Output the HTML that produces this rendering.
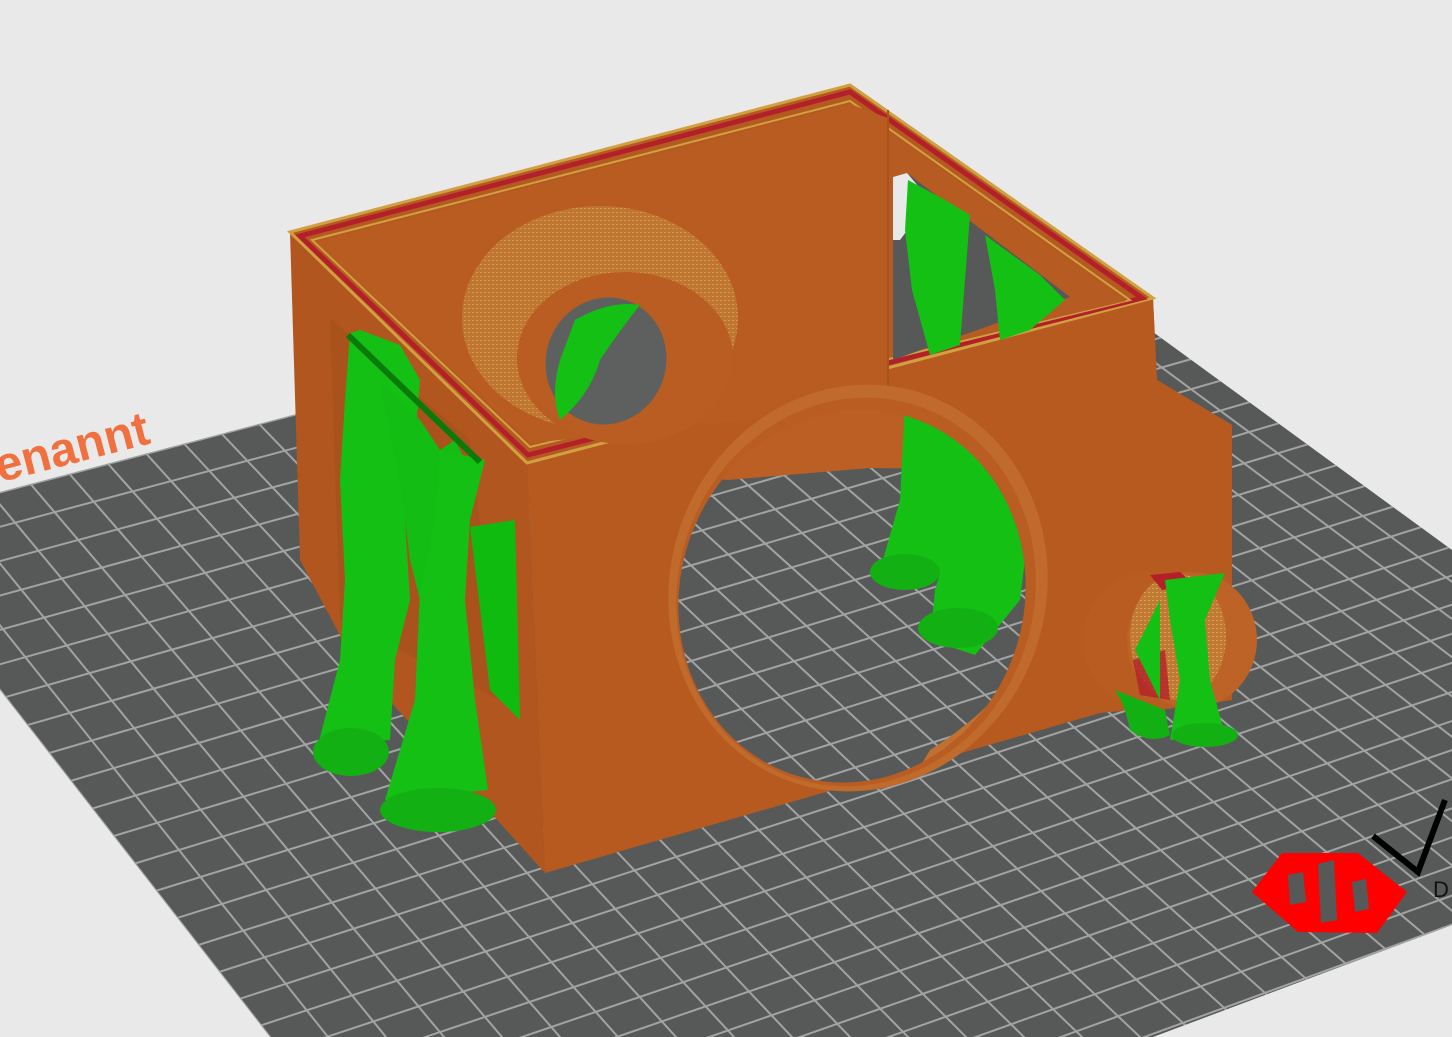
<!DOCTYPE html>
<html><head><meta charset="utf-8"><style>
html,body{margin:0;padding:0;background:#e9e9e9;width:1452px;height:1037px;overflow:hidden;}
svg{display:block;}
</style></head><body>
<svg id="s" width="1452" height="1037" viewBox="0 0 1452 1037" xmlns="http://www.w3.org/2000/svg">
<defs>
<clipPath id="plate"><polygon points="0,492 1009,227 1452,550 1452,925 1153,1037 270,1037 0,690"/></clipPath>
<clipPath id="inner"><polygon points="660,475 728,480 870,468 1050,470 1050,800 660,800"/></clipPath>
<pattern id="dots" width="4" height="4" patternUnits="userSpaceOnUse"><rect width="4" height="4" fill="#c07a35"/><rect width="2" height="1" fill="#d9a448"/></pattern>
</defs>
<rect width="1452" height="1037" fill="#e9e9e9"/>
<polygon points="0,492 1009,227 1452,550 1452,925 1153,1037 270,1037 0,690" fill="#575858"/>
<g id="grid" clip-path="url(#plate)" stroke="#a2a3a3" stroke-width="2"></g>
<text x="152" y="443" transform="rotate(-14.5 152 443)" text-anchor="end" font-family="Liberation Sans, sans-serif" font-weight="bold" font-size="48" letter-spacing="0" fill="#f07040">enannt</text>

<!-- logo -->
<polygon points="1252,892 1282,853 1358,853 1407,892 1377,933 1298,932" fill="#ff0000"/>
<polygon points="1288,875 1303,872 1306,902 1290,905" fill="#575858"/>
<polygon points="1318,864 1334,860 1337,920 1321,923" fill="#575858"/>
<polygon points="1352,882 1366,879 1369,909 1355,912" fill="#575858"/>
<path d="M1373,836 L1418,872 L1445,800" stroke="#000" stroke-width="6" fill="none"/>
<text x="1433" y="897" font-family="Liberation Sans, sans-serif" font-size="22" fill="#111">D</text>

<!-- left face -->
<polygon points="290,232 527,463 545,873 353,660 300,560" fill="#b0561e"/>
<polygon points="330,318 470,440 500,700 340,620" fill="#a9521c"/>
<polygon points="470,527 515,520 520,720 490,690" fill="#10bb10"/>

<!-- front face -->
<polygon points="527,463 1153,298 1157,380 1232,425 1232,700 1100,713 545,873" fill="#b65a20"/>
<!-- top rim and interior -->
<polygon points="290,232 850,85 1153,298 527,463" fill="#b45a20"/>
<polygon points="290,232 850,85 1153,298 527,463" fill="none" stroke="#d1a040" stroke-width="3"/>
<polygon points="300,236 850,92 1142,298 528,455" fill="none" stroke="#b3202a" stroke-width="5"/>
<polygon points="312,240 850,101 1130,300 530,447" fill="none" stroke="#d1a040" stroke-width="2"/>
<polygon points="316,242 850,104 1126,301 531,443" fill="#b65b22"/>
<polygon points="316,242 850,104 888,118 888,405 531,443" fill="#b85c22"/>
<line x1="888" y1="110" x2="888" y2="400" stroke="#a8521c" stroke-width="2"/>
<!-- back tube -->
<ellipse cx="600" cy="318" rx="138" ry="112" fill="url(#dots)" opacity="0.85"/>
<ellipse cx="625" cy="358" rx="108" ry="86" fill="#b95d22"/>
<ellipse cx="606" cy="361" rx="60" ry="64" transform="rotate(20 606 361)" fill="#5e5f5f"/>
<path d="M575,320 Q610,300 640,305 Q620,330 600,360 Q590,395 560,420 Q550,395 560,360 Z" fill="#14c014"/>
<!-- right window -->
<polygon points="893,177 907,173 1070,297 893,360" fill="#575858"/>
<polygon points="893,177 907,173 930,200 900,240 893,240" fill="#e9e9e9"/>
<path d="M908,180 L945,200 L970,215 L965,280 L960,345 L930,355 L912,290 L905,230 Z" fill="#14c014"/>
<path d="M985,235 L1040,275 L1065,300 L1030,330 L1000,340 L995,290 Z" fill="#14c014"/>
<!-- front hole -->
<ellipse cx="858" cy="588" rx="188" ry="205" transform="rotate(18 858 588)" fill="#c06a2c"/>
<ellipse cx="856" cy="592" rx="178" ry="196" transform="rotate(18 856 592)" fill="#b95d22"/>
<clipPath id="hole"><ellipse cx="852" cy="596" rx="172" ry="188" transform="rotate(18 852 596)"/></clipPath>
<g clip-path="url(#hole)">
<rect x="600" y="380" width="500" height="450" fill="#bb5f24"/>
<polygon points="660,475 728,480 870,468 1050,470 1050,800 660,800" fill="#575858"/>
<g clip-path="url(#inner)"><g id="grid2" stroke="#a2a3a3" stroke-width="2"></g></g>
<path d="M905,400 L945,395 L965,430 L960,500 L955,575 L910,580 L880,570 L900,500 Z" fill="#14c014"/>
<path d="M960,430 L1000,440 L1030,520 L1020,600 L975,655 L930,640 L935,590 L955,520 Z" fill="#14c014"/>
<ellipse cx="905" cy="572" rx="35" ry="18" fill="#12b012"/>
<ellipse cx="958" cy="628" rx="40" ry="20" fill="#12b012"/>
<path d="M930,750 Q1010,700 1050,620 L1060,800 L900,800 Z" fill="#c07030"/>
</g>
<!-- right block + tube -->
<polygon points="1153,298 1157,380 1232,425 1232,700 1160,710" fill="#b65a20"/>
<ellipse cx="1150" cy="640" rx="67" ry="68" fill="#b85c22"/>
<rect x="1150" y="572" width="42" height="136" fill="#b85c22"/>
<ellipse cx="1192" cy="640" rx="65" ry="68" fill="#bd6328"/>
<ellipse cx="1178" cy="637" rx="48" ry="63" fill="url(#dots)"/>
<polygon points="1150,575 1180,572 1195,585 1162,590" fill="#b3202a"/>
<polygon points="1133,660 1165,650 1170,700 1140,695" fill="#b3202a" opacity="0.8"/>
<path d="M1165,580 L1225,573 L1205,620 L1210,680 L1225,735 L1170,740 L1180,680 L1170,620 Z" fill="#14c014"/>
<path d="M1135,650 L1160,600 L1160,700 Z" fill="#14c014"/>
<ellipse cx="1205" cy="735" rx="33" ry="12" fill="#12b012"/>
<path d="M1115,690 Q1125,705 1130,730 Q1150,745 1170,735 L1165,710 Z" fill="#12b012"/>

<!-- left supports -->
<path d="M350,333 L360,330 L400,345 L420,380 L415,440 L405,520 L410,600 L395,660 L390,740 L318,745 L340,660 L345,580 L340,480 L345,400 Z" fill="#14c014"/>
<ellipse cx="351" cy="752" rx="38" ry="24" fill="#12b012"/>
<path d="M380,380 L420,420 L440,450 L455,440 L470,470 L450,520 L430,560 L420,600 L410,560 L400,480 Z" fill="#13bd13"/>
<path d="M440,450 L485,460 L470,520 L465,600 L475,700 L488,790 L385,800 L415,700 L420,590 L435,520 Z" fill="#14c014"/>
<ellipse cx="438" cy="810" rx="58" ry="22" fill="#12b012"/>
<path d="M348,335 L480,462" stroke="#0a7a0a" stroke-width="6"/>
</svg>
<script>
(function(){
var ns="http://www.w3.org/2000/svg";
function line(g,x1,y1,x2,y2){var l=document.createElementNS(ns,"line");l.setAttribute("x1",x1);l.setAttribute("y1",y1);l.setAttribute("x2",x2);l.setAttribute("y2",y2);g.appendChild(l);}
var gs=[document.getElementById("grid"),document.getElementById("grid2")];
gs.forEach(function(g){
 var vx=-2162,vy=-2088;
 for(var i=-50;i<50;i++){var px=270+58*i,py=1037;var dx=px-vx,dy=py-vy;var t=(1100-vy)/dy;line(g,vx,vy,vx+dx*t,1100);}
 var N=28;
 for(var j=0;j<=N;j++){var t=j/N;line(g,-200,545+t*983,1700,45+t*789);}
});
})();
</script>
</body></html>
